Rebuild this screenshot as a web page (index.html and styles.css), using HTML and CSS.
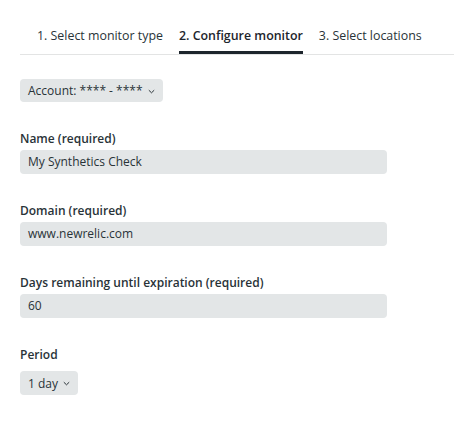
FILE: index.html
```html
<!DOCTYPE html>
<html lang="en">
<head>
<meta charset="utf-8">
<title>Configure monitor</title>
<link rel="stylesheet" href="styles.css">
</head>
<body>
<div class="page">
  <nav class="tabs">
    <div class="tab">1. Select monitor type</div>
    <div class="tab active">2. Configure monitor</div>
    <div class="tab">3. Select locations</div>
  </nav>

  <div class="account">
    <button class="select">Account: **** - ****
      <svg class="chev" width="7" height="5" viewBox="0 0 7 5"><path d="M0.8 1.2 L3.5 3.8 L6.2 1.2" fill="none" stroke="#293338" stroke-width="1"/></svg>
    </button>
  </div>

  <div class="field">
    <label class="label">Name (required)</label>
    <div class="input">My Synthetics Check</div>
  </div>
  <div class="field">
    <label class="label">Domain (required)</label>
    <div class="input">www.newrelic.com</div>
  </div>
  <div class="field">
    <label class="label">Days remaining until expiration (required)</label>
    <div class="input">60</div>
  </div>
  <div class="field">
    <label class="label">Period</label>
    <div class="select-wrap">
      <button class="select">1 day
        <svg class="chev" width="7" height="5" viewBox="0 0 7 5"><path d="M0.8 1.2 L3.5 3.8 L6.2 1.2" fill="none" stroke="#293338" stroke-width="1"/></svg>
      </button>
    </div>
  </div>
</div>
</body>
</html>
```
FILE: styles.css
```css
html, body {
  margin: 0;
  padding: 0;
  background: #ffffff;
}
body {
  font-family: "Open Sans", "Liberation Sans", sans-serif;
  font-size: 12px;
  color: #293338;
}
.page {
  padding: 21px 0 0 20px;
}
.tabs {
  display: flex;
  gap: 16px;
  padding-left: 17px;
  border-bottom: 1px solid #e3e4e4;
}
.tab {
  padding: 7px 0 10px;
  line-height: 16px;
  font-size: 12.4px;
  color: #293338;
}
.tab.active {
  font-weight: 600;
  color: #1d252c;
  box-shadow: inset 0 -3px 0 #1d252c;
}
.account {
  margin-top: 24px;
}
.select {
  display: inline-flex;
  align-items: center;
  gap: 5px;
  height: 23px;
  padding: 0 8px;
  border: none;
  border-radius: 4px;
  background: #e3e6e7;
  font-family: inherit;
  font-size: 12px;
  color: #293338;
}
.chev {
  margin-top: 1px;
}
.field {
  margin-top: 29px;
  display: flex;
  flex-direction: column;
}
.label {
  font-weight: 600;
  line-height: 16px;
  color: #293338;
}
.input {
  margin-top: 3px;
  width: 367px;
  height: 24px;
  box-sizing: border-box;
  padding: 0 8px;
  line-height: 24px;
  border-radius: 4px;
  background: #e3e6e7;
}
.select-wrap {
  margin-top: 8px;
}
.select-wrap .select {
  height: 24px;
}
```
